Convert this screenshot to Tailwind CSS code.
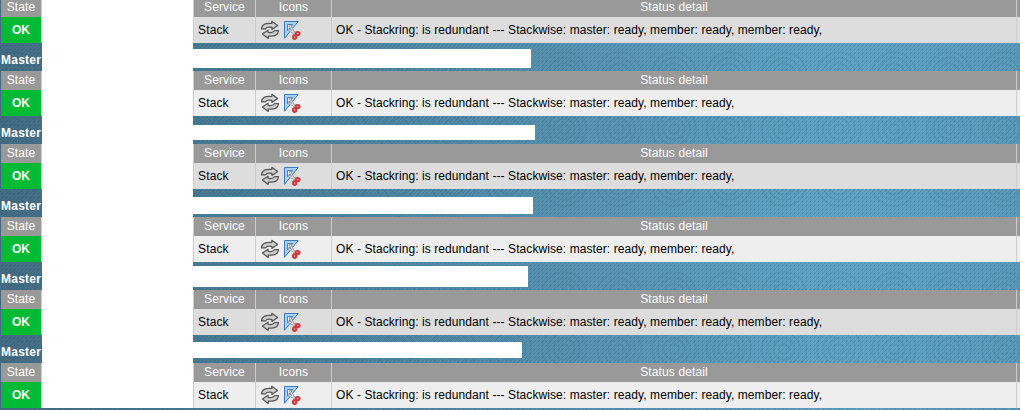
<!DOCTYPE html>
<html lang="en">
<head>
<meta charset="utf-8">
<title>Stack status</title>
<script src="https://cdn.jsdelivr.net/npm/@tailwindcss/browser@4"></script>
</head>
<body class="relative h-[410px] w-[1020px] overflow-hidden font-['Liberation_Sans',Arial,sans-serif] text-[12px] leading-[14px]">
<svg class="absolute inset-0 -z-10" width="1020" height="410">
  <defs>
    <linearGradient id="bg"><stop offset="0" stop-color="#446d84"/><stop offset=".2" stop-color="#487b94"/><stop offset=".52" stop-color="#5690af"/><stop offset=".83" stop-color="#60a4c4"/><stop offset="1" stop-color="#5b9aba"/></linearGradient>
    <pattern id="weave" width="4" height="4" patternUnits="userSpaceOnUse" shape-rendering="crispEdges"><path d="M3 0h1v1h-1zM2 1h1v1h-1zM1 2h1v1h-1zM0 3h1v1h-1z" fill="#163f58" fill-opacity=".12"/><path d="M2 1h1v1h-1z" fill="#163f58" fill-opacity=".22"/></pattern>
    <pattern id="rings" x="536.5" y="101.5" width="55" height="55" patternUnits="userSpaceOnUse"><g fill="none" stroke="#174963" stroke-opacity=".13" stroke-width="1.4"><circle cx="27.5" cy="27.5" r="5"/><circle cx="27.5" cy="27.5" r="10.5"/><circle cx="27.5" cy="27.5" r="16"/><circle cx="27.5" cy="27.5" r="22"/></g></pattern>
  </defs>
  <rect width="1020" height="410" fill="url(#bg)"/><rect width="1020" height="410" fill="url(#weave)"/><rect width="1020" height="410" fill="url(#rings)"/>
</svg>
<svg class="hidden">
  <symbol id="reload" viewBox="0 0 20 20">
    <g fill="#cfcfcf" stroke="#555" stroke-width="1.2" stroke-linejoin="round">
      <path d="M1.5 8.9C1.8 4.8 5 2.8 11.8 3.5V1.3L17.6 5.6l-5.7 3.9V7.3C8 6.7 6.3 7 5.4 8.9z"/>
      <path d="M18.5 10.6C18.2 14.7 15 16.7 8.2 16v2.4L2.4 14l5.7-3.8v2.1c3.9.7 5.6.2 6.5-1.7z"/>
    </g>
  </symbol>
  <symbol id="graph" viewBox="0 0 18 20">
    <path d="M1.5 1.5H15.2L1.5 18.3z" fill="#a9d0f8" stroke="#3c78c4"/>
    <path d="M4.5 4.5h5.2L4.5 10.8z" fill="#eef3fa" stroke="#4a82c8"/>
    <path d="M7 5.2l4.6 9.3M5 9.5l8.5 4.2" stroke="#858d96" stroke-width="2.4"/>
    <path d="M7.2 5.8l4.2 8.4M5.4 9.8l7.6 3.7" stroke="#d9dde1" stroke-width="1.1"/>
    <g fill="#f0b0b0" stroke="#cc3a3f" stroke-width="2"><ellipse cx="14.6" cy="13.6" rx="2" ry="1.6"/><ellipse cx="11.6" cy="17.1" rx="1.7" ry="1.8"/></g>
  </symbol>
</svg>
<main id="list" class="-mt-[2px]"></main>
<template id="row">
  <section>
    <div class="flex h-[45px] w-full">
      <div class="ml-px w-10 text-center">
        <div class="h-[19px] bg-[#999] pt-[2px] tracking-[0.1px] text-white">State</div>
        <div class="h-[26px] bg-[#0b3] pt-[6px] font-bold text-white">OK</div>
      </div>
      <div class="w-px bg-[#ccc]"></div>
      <div class="w-[151px] bg-white"></div>
      <div class="flex-1">
        <div class="flex h-[19px] bg-[#999] text-center tracking-[0.12px] text-white">
          <div class="w-[62px] border-l border-[#ccc] pt-[2px]">Service</div>
          <div class="w-[76px] border-l border-[#ccc] pt-[2px]">Icons</div>
          <div class="w-[685px] border-l border-[#ccc] pt-[2px]">Status detail</div>
          <div class="flex-1 border-l border-[#ccc]"></div>
        </div>
        <div data-body class="flex h-[26px] tracking-[0.082px] text-black">
          <div class="w-[62px] border-l border-[#ccc] pt-[6px] pl-1 tracking-[0.15px]">Stack</div>
          <div class="flex w-[76px] gap-[3px] border-l border-[#ccc] pt-[3px] pl-1"><svg class="h-5 w-5"><use href="#reload"/></svg><svg class="h-5 w-[18px]"><use href="#graph"/></svg></div>
          <div data-detail class="w-[685px] border-l border-[#ccc] pt-[6px] pl-1 whitespace-nowrap"></div>
          <div class="flex-1 border-l border-[#ccc]"></div>
        </div>
      </div>
    </div>
    <div data-gap class="flex h-7">
      <div class="w-[42px] pt-[10px] pl-px font-bold tracking-[0.25px] text-white">Master</div>
      <div class="w-[151px] bg-white"></div>
      <div data-bar class="bg-white"></div>
    </div>
  </section>
</template>
<script>
  // [member count, bar top margin, bar height, bar width]
  const rows = [[2,6,19,338],[1,9,15,342],[1,8,17,340],[1,4,21,335],[2,7,16,329],[2,0,0,0]];
  rows.forEach(([n, top, h, w], i) => {
    const r = document.getElementById('row').content.cloneNode(true);
    r.querySelector('[data-body]').classList.add(i % 2 ? 'bg-[#eee]' : 'bg-[#ddd]');
    r.querySelector('[data-detail]').textContent = 'OK - Stackring: is redundant --- Stackwise: master: ready,' + ' member: ready,'.repeat(n);
    const bar = r.querySelector('[data-bar]');
    bar.style.cssText = `margin-top:${top}px;height:${h}px;width:${w}px`;
    if (i === 5) r.querySelector('[data-gap]').remove();
    document.getElementById('list').append(r);
  });
</script>
</body>
</html>
